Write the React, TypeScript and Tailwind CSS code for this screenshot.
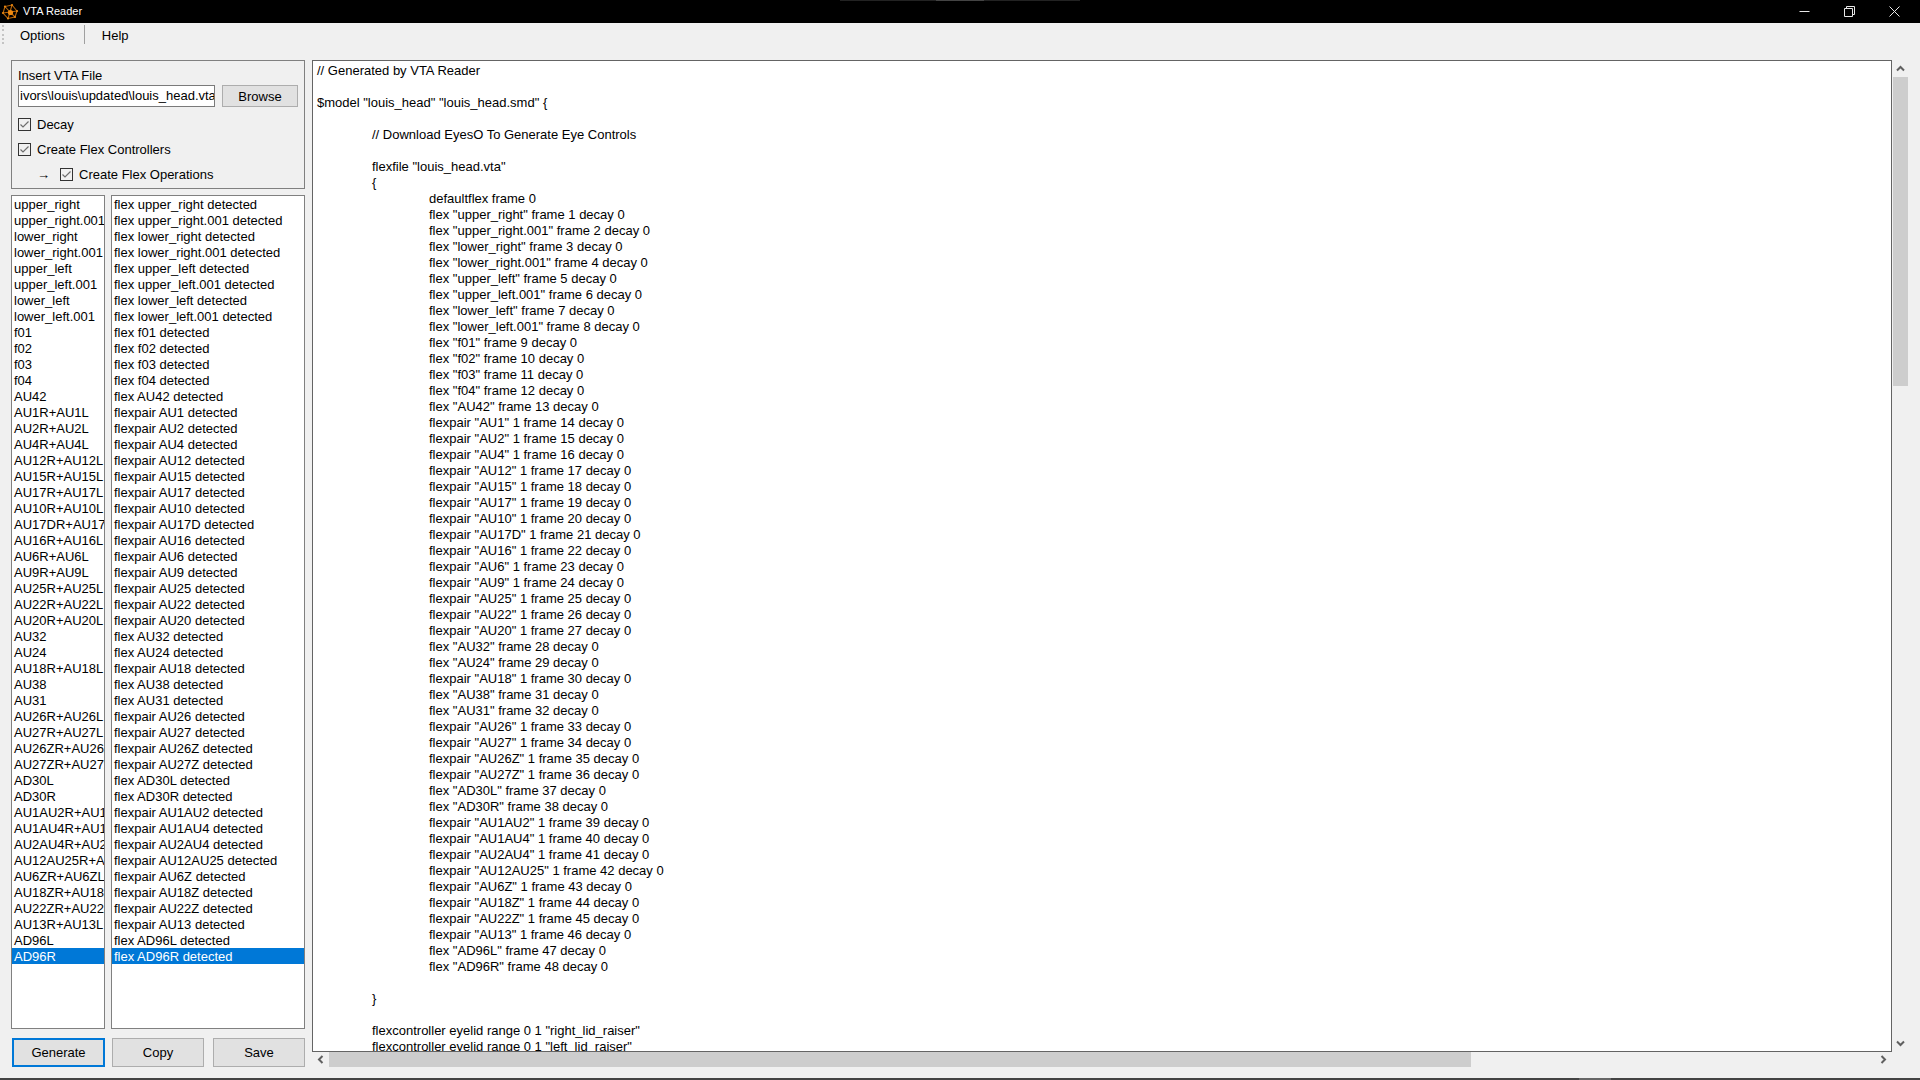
import React from "react";

type Item = [string, boolean];
const p = (n: string): Item => [n, true];
const f = (n: string): Item => [n, false];

const items: Item[] = [
  ...["upper_right", "upper_right.001", "lower_right", "lower_right.001", "upper_left", "upper_left.001", "lower_left", "lower_left.001", "f01", "f02", "f03", "f04", "AU42"].map(f),
  ...["AU1", "AU2", "AU4", "AU12", "AU15", "AU17", "AU10", "AU17D", "AU16", "AU6", "AU9", "AU25", "AU22", "AU20"].map(p),
  f("AU32"), f("AU24"), p("AU18"), f("AU38"), f("AU31"),
  ...["AU26", "AU27", "AU26Z", "AU27Z"].map(p),
  f("AD30L"), f("AD30R"),
  ...["AU1AU2", "AU1AU4", "AU2AU4", "AU12AU25", "AU6Z", "AU18Z", "AU22Z", "AU13"].map(p),
  f("AD96L"), f("AD96R"),
];

const font = "font-['Liberation_Sans',Arial,sans-serif]";

function Check() {
  return (
    <span className="flex h-[13px] w-[13px] shrink-0 items-center justify-center border border-[#333333] bg-[#f0f0f0]">
      <svg width="11" height="11" viewBox="0 0 11 11" fill="none">
        <path d="M1.5 5.5 L4 8 L9.5 2.5" stroke="#6e6e6e" strokeWidth="1.2" />
      </svg>
    </span>
  );
}

function Chevron({ rotate }: { rotate: string }) {
  return (
    <svg width="9" height="7" viewBox="0 0 9 7" fill="none" className={rotate}>
      <path d="M1 5.5 L4.5 2 L8 5.5" stroke="#606060" strokeWidth="2" />
    </svg>
  );
}

function Btn({ label, cls }: { label: string; cls: string }) {
  return (
    <div className={`flex items-center justify-center bg-[#e1e1e1] text-black ${cls}`}>{label}</div>
  );
}

function Line({ t, lvl = 0 }: { t?: string; lvl?: number }) {
  const pad = lvl === 2 ? "pl-[112px]" : lvl === 1 ? "pl-[55px]" : "pl-0";
  return <div className={`h-[16px] whitespace-pre leading-[18px] ${pad}`}>{t ?? " "}</div>;
}

export default function App() {
  return (
    <div className={`flex h-[1080px] w-[1920px] flex-col overflow-hidden bg-[#f0f0f0] text-[13px] text-black ${font}`}>
      <div className="relative flex h-[23px] shrink-0 items-center bg-black text-[11px] text-white">
        <div className="absolute left-[840px] top-0 h-px w-[240px] bg-[#222222]" />
        <div className="absolute left-[936px] top-0 h-px w-[48px] bg-[#444444]" />
        <svg width="18" height="18" viewBox="0 0 18 18" className="ml-[1px]" fill="none">
          <g stroke="#b8660c" strokeWidth="1.1">
            <path d="M9 9 L4 3.5 L11 2 L16 8 L14 14 L7 15.5 L2 10 L4 3.5" />
            <path d="M9 9 L11 2 M9 9 L16 8 M9 9 L7 15.5 M9 9 L2 10 M9 9 L14 14" />
          </g>
          <circle cx="9.5" cy="9.5" r="2.6" fill="#f08a10" />
          <circle cx="4" cy="3.5" r="1.1" fill="#e8860f" />
          <circle cx="11" cy="2" r="1.1" fill="#e8860f" />
          <circle cx="16" cy="8" r="1.1" fill="#e8860f" />
          <circle cx="14" cy="14" r="1.1" fill="#e8860f" />
          <circle cx="7" cy="15.5" r="1.1" fill="#e8860f" />
          <circle cx="2" cy="10" r="1.1" fill="#e8860f" />
        </svg>
        <span className="ml-[4px]">VTA Reader</span>
        <div className="ml-auto flex items-center">
          <svg width="11" height="11" viewBox="0 0 11 11" className="mr-[34px]" fill="none">
            <path d="M0.5 5.5 H10.5" stroke="#e8e8e8" />
          </svg>
          <svg width="11" height="11" viewBox="0 0 11 11" className="mr-[34px]" fill="none">
            <path d="M0.5 2.5 H8.5 V10.5 H0.5 Z M2.5 2.5 V0.5 H10.5 V8.5 H8.5" stroke="#e8e8e8" />
          </svg>
          <svg width="11" height="11" viewBox="0 0 11 11" className="mr-[20px]" fill="none">
            <path d="M0.5 0.5 L10.5 10.5 M10.5 0.5 L0.5 10.5" stroke="#e8e8e8" />
          </svg>
        </div>
      </div>

      <div className="flex h-[37px] shrink-0 items-start">
        <div className="ml-[2px] mt-[2px] flex h-[19px] w-[2px] flex-col justify-between">
          {[0, 1, 2, 3, 4].map((i) => (
            <div key={i} className="h-[2px] w-[2px] bg-[#c4c4c4]" />
          ))}
        </div>
        <span className="ml-[16px] mt-[5px] leading-[16px]">Options</span>
        <div className="ml-[19px] mt-[2px] h-[19px] w-px bg-[#a0a0a0]" />
        <span className="ml-[17px] mt-[5px] leading-[16px]">Help</span>
      </div>

      <div className="flex min-h-0 flex-1 gap-[7px] pl-[11px] pr-[12px]">
        <div className="flex w-[294px] shrink-0 flex-col">
          <div className="relative h-[129px] shrink-0 border border-[#808080] pl-[6px]">
            <div className="pt-[7px] leading-[16px]">Insert VTA File</div>
            <div className="mt-px flex h-[22px] gap-[7px]">
              <div className="flex w-[197px] items-center overflow-hidden whitespace-nowrap border border-[#7a7a7a] bg-white pl-[1px]">
                ivors\louis\updated\louis_head.vta
              </div>
              <Btn label="Browse" cls="w-[76px] border border-[#adadad] pt-[2px]" />
            </div>
            <div className="mt-[11px] flex h-[13px] items-center gap-[6px]">
              <Check />
              <span>Decay</span>
            </div>
            <div className="mt-[12px] flex h-[13px] items-center gap-[6px]">
              <Check />
              <span>Create Flex Controllers</span>
            </div>
            <div className="mt-[12px] flex h-[13px] items-center gap-[6px]">
              <span className="ml-[19px] w-[17px]">→</span>
              <Check />
              <span>Create Flex Operations</span>
            </div>
          </div>

          <div className="mt-[6px] flex h-[834px] shrink-0 gap-[6px]">
            <div className="h-full w-[94px] shrink-0 overflow-hidden border border-[#808080] bg-white">
              {items.map(([n, pair], i) => (
                <div
                  key={n}
                  className={`h-[16px] overflow-hidden whitespace-nowrap pl-[2px] leading-[18px] ${i === items.length - 1 ? "bg-[#0078d7] text-white" : ""}`}
                >
                  {pair ? `${n}R+${n}L` : n}
                </div>
              ))}
            </div>
            <div className="h-full flex-1 overflow-hidden border border-[#808080] bg-white">
              {items.map(([n, pair], i) => (
                <div
                  key={n}
                  className={`h-[16px] overflow-hidden whitespace-nowrap pl-[2px] leading-[18px] ${i === items.length - 1 ? "bg-[#0078d7] text-white" : ""}`}
                >
                  {pair ? `flexpair ${n} detected` : `flex ${n} detected`}
                </div>
              ))}
            </div>
          </div>

          <div className="mt-[9px] flex h-[29px] shrink-0 pl-[1px]">
            <Btn label="Generate" cls="w-[93px] border-2 border-[#0078d7]" />
            <Btn label="Copy" cls="ml-[7px] w-[92px] border border-[#adadad]" />
            <Btn label="Save" cls="ml-[9px] w-[92px] border border-[#adadad]" />
          </div>
        </div>

        <div className="flex min-w-0 flex-1 flex-col">
          <div className="flex h-[992px] shrink-0">
            <div className="min-w-0 flex-1 overflow-hidden border border-[#646464] bg-white pl-[4px] pt-[1px]">
              <Line t="// Generated by VTA Reader" />
              <Line />
              <Line t={'$model "louis_head" "louis_head.smd" {'} />
              <Line />
              <Line lvl={1} t="// Download EyesO To Generate Eye Controls" />
              <Line />
              <Line lvl={1} t={'flexfile "louis_head.vta"'} />
              <Line lvl={1} t="{" />
              <Line lvl={2} t="defaultflex frame 0" />
              {items.map(([n, pair], i) => (
                <Line
                  key={n}
                  lvl={2}
                  t={pair ? `flexpair "${n}" 1 frame ${i + 1} decay 0` : `flex "${n}" frame ${i + 1} decay 0`}
                />
              ))}
              <Line />
              <Line lvl={1} t="}" />
              <Line />
              <Line lvl={1} t={'flexcontroller eyelid range 0 1 "right_lid_raiser"'} />
              <Line lvl={1} t={'flexcontroller eyelid range 0 1 "left_lid_raiser"'} />
            </div>
            <div className="flex w-[16px] shrink-0 flex-col pl-px">
              <div className="flex h-[17px] shrink-0 items-center justify-center">
                <Chevron rotate="" />
              </div>
              <div className="h-[309px] w-[15px] shrink-0 bg-[#cdcdcd]" />
              <div className="mt-auto flex h-[17px] shrink-0 items-center justify-center">
                <Chevron rotate="rotate-180" />
              </div>
            </div>
          </div>
          <div className="flex h-[15px] shrink-0 pr-[16px]">
            <div className="flex w-[17px] shrink-0 items-center justify-center">
              <Chevron rotate="-rotate-90" />
            </div>
            <div className="h-[15px] w-[1142px] shrink-0 bg-[#cdcdcd]" />
            <div className="ml-auto flex w-[17px] shrink-0 items-center justify-center">
              <Chevron rotate="rotate-90" />
            </div>
          </div>
        </div>
      </div>

      <div className="relative h-[2px] shrink-0 bg-[#444444]">
        <div className="absolute left-[1579px] top-0 h-[2px] w-[32px] bg-[#666666]" />
      </div>
    </div>
  );
}
